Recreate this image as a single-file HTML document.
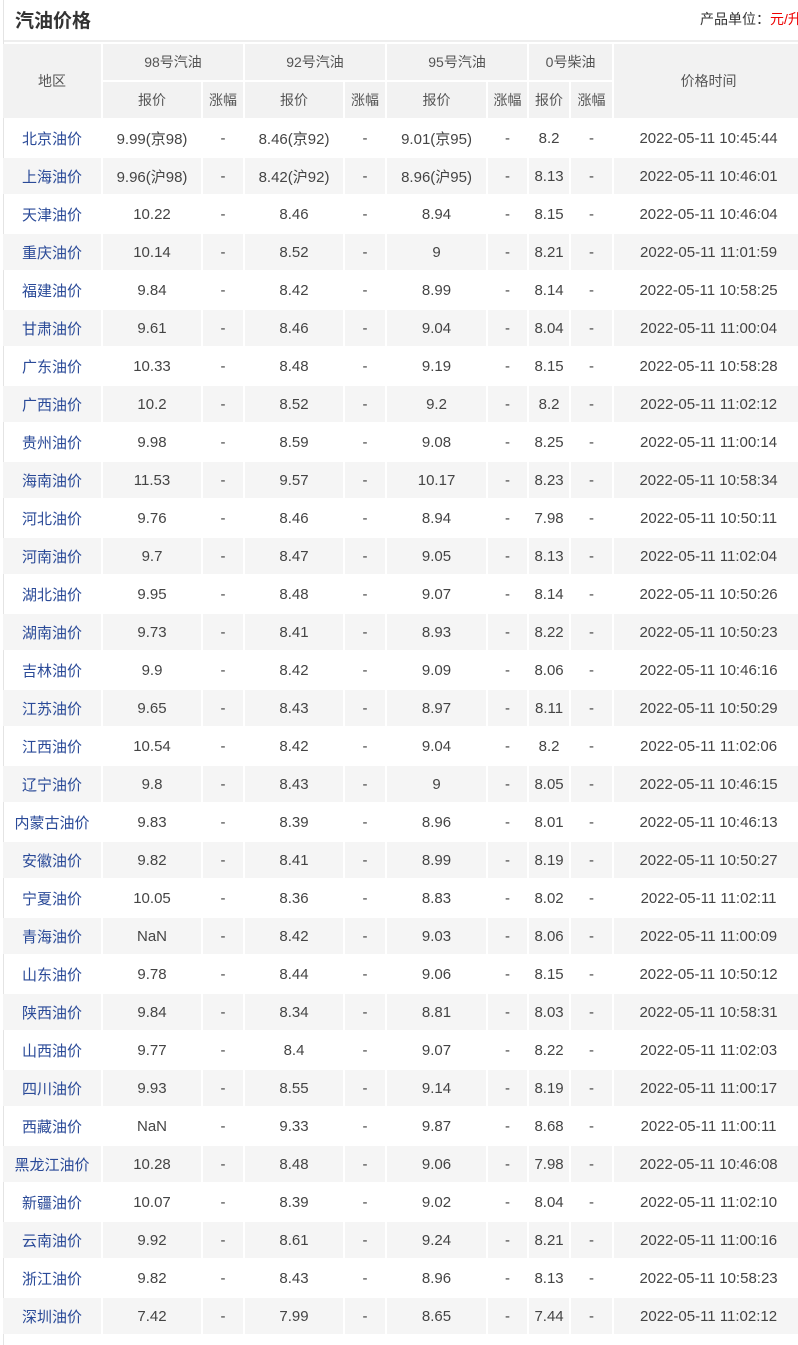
<!DOCTYPE html>
<html><head><meta charset="utf-8"><style>
body{margin:0;width:798px;height:1345px;overflow:hidden;background:#fff;font-family:"Liberation Sans","Noto Sans CJK SC",sans-serif;color:#444;font-size:15px;position:relative}
.lb{position:absolute;left:3px;top:0;width:1px;height:1345px;background:#e4e4e4}
.title{position:absolute;left:15px;top:6px;font-size:19px;font-weight:bold;color:#333}
.unit{position:absolute;left:700px;top:9px;font-size:14px;color:#333;white-space:nowrap}
.unit b{color:#e00;font-weight:normal}
.sep{position:absolute;left:4px;right:0;top:40px;height:2px;background:#eee}
table{position:absolute;left:1px;top:42px;border-collapse:separate;border-spacing:2px;table-layout:fixed;width:812px}
td,th{padding:0;text-align:center;font-weight:normal;white-space:nowrap;overflow:hidden}
thead th{background:#f2f2f2;height:36px;color:#555;font-size:14px}
tbody td{height:36px}
tbody tr:nth-child(even) td{background:#f5f5f5}
td a{color:#2a4a98;text-decoration:none}
td.t{padding-right:10px}
</style></head><body>
<div class="lb"></div>
<div class="title">汽油价格</div>
<div class="unit">产品单位：<b>元/升</b></div>
<div class="sep"></div>
<table>
<colgroup><col style="width:98px"><col style="width:98px"><col style="width:40px"><col style="width:98px"><col style="width:40px"><col style="width:99px"><col style="width:39px"><col style="width:40px"><col style="width:41px"><col style="width:199px"></colgroup>
<thead>
<tr><th rowspan="2">地区</th><th colspan="2">98号汽油</th><th colspan="2">92号汽油</th><th colspan="2">95号汽油</th><th colspan="2">0号柴油</th><th rowspan="2" style="padding-right:10px">价格时间</th></tr>
<tr><th>报价</th><th>涨幅</th><th>报价</th><th>涨幅</th><th>报价</th><th>涨幅</th><th>报价</th><th>涨幅</th></tr>
</thead>
<tbody>
<tr><td><a>北京油价</a></td><td>9.99(京98)</td><td>-</td><td>8.46(京92)</td><td>-</td><td>9.01(京95)</td><td>-</td><td>8.2</td><td>-</td><td class="t">2022-05-11 10:45:44</td></tr>
<tr><td><a>上海油价</a></td><td>9.96(沪98)</td><td>-</td><td>8.42(沪92)</td><td>-</td><td>8.96(沪95)</td><td>-</td><td>8.13</td><td>-</td><td class="t">2022-05-11 10:46:01</td></tr>
<tr><td><a>天津油价</a></td><td>10.22</td><td>-</td><td>8.46</td><td>-</td><td>8.94</td><td>-</td><td>8.15</td><td>-</td><td class="t">2022-05-11 10:46:04</td></tr>
<tr><td><a>重庆油价</a></td><td>10.14</td><td>-</td><td>8.52</td><td>-</td><td>9</td><td>-</td><td>8.21</td><td>-</td><td class="t">2022-05-11 11:01:59</td></tr>
<tr><td><a>福建油价</a></td><td>9.84</td><td>-</td><td>8.42</td><td>-</td><td>8.99</td><td>-</td><td>8.14</td><td>-</td><td class="t">2022-05-11 10:58:25</td></tr>
<tr><td><a>甘肃油价</a></td><td>9.61</td><td>-</td><td>8.46</td><td>-</td><td>9.04</td><td>-</td><td>8.04</td><td>-</td><td class="t">2022-05-11 11:00:04</td></tr>
<tr><td><a>广东油价</a></td><td>10.33</td><td>-</td><td>8.48</td><td>-</td><td>9.19</td><td>-</td><td>8.15</td><td>-</td><td class="t">2022-05-11 10:58:28</td></tr>
<tr><td><a>广西油价</a></td><td>10.2</td><td>-</td><td>8.52</td><td>-</td><td>9.2</td><td>-</td><td>8.2</td><td>-</td><td class="t">2022-05-11 11:02:12</td></tr>
<tr><td><a>贵州油价</a></td><td>9.98</td><td>-</td><td>8.59</td><td>-</td><td>9.08</td><td>-</td><td>8.25</td><td>-</td><td class="t">2022-05-11 11:00:14</td></tr>
<tr><td><a>海南油价</a></td><td>11.53</td><td>-</td><td>9.57</td><td>-</td><td>10.17</td><td>-</td><td>8.23</td><td>-</td><td class="t">2022-05-11 10:58:34</td></tr>
<tr><td><a>河北油价</a></td><td>9.76</td><td>-</td><td>8.46</td><td>-</td><td>8.94</td><td>-</td><td>7.98</td><td>-</td><td class="t">2022-05-11 10:50:11</td></tr>
<tr><td><a>河南油价</a></td><td>9.7</td><td>-</td><td>8.47</td><td>-</td><td>9.05</td><td>-</td><td>8.13</td><td>-</td><td class="t">2022-05-11 11:02:04</td></tr>
<tr><td><a>湖北油价</a></td><td>9.95</td><td>-</td><td>8.48</td><td>-</td><td>9.07</td><td>-</td><td>8.14</td><td>-</td><td class="t">2022-05-11 10:50:26</td></tr>
<tr><td><a>湖南油价</a></td><td>9.73</td><td>-</td><td>8.41</td><td>-</td><td>8.93</td><td>-</td><td>8.22</td><td>-</td><td class="t">2022-05-11 10:50:23</td></tr>
<tr><td><a>吉林油价</a></td><td>9.9</td><td>-</td><td>8.42</td><td>-</td><td>9.09</td><td>-</td><td>8.06</td><td>-</td><td class="t">2022-05-11 10:46:16</td></tr>
<tr><td><a>江苏油价</a></td><td>9.65</td><td>-</td><td>8.43</td><td>-</td><td>8.97</td><td>-</td><td>8.11</td><td>-</td><td class="t">2022-05-11 10:50:29</td></tr>
<tr><td><a>江西油价</a></td><td>10.54</td><td>-</td><td>8.42</td><td>-</td><td>9.04</td><td>-</td><td>8.2</td><td>-</td><td class="t">2022-05-11 11:02:06</td></tr>
<tr><td><a>辽宁油价</a></td><td>9.8</td><td>-</td><td>8.43</td><td>-</td><td>9</td><td>-</td><td>8.05</td><td>-</td><td class="t">2022-05-11 10:46:15</td></tr>
<tr><td><a>内蒙古油价</a></td><td>9.83</td><td>-</td><td>8.39</td><td>-</td><td>8.96</td><td>-</td><td>8.01</td><td>-</td><td class="t">2022-05-11 10:46:13</td></tr>
<tr><td><a>安徽油价</a></td><td>9.82</td><td>-</td><td>8.41</td><td>-</td><td>8.99</td><td>-</td><td>8.19</td><td>-</td><td class="t">2022-05-11 10:50:27</td></tr>
<tr><td><a>宁夏油价</a></td><td>10.05</td><td>-</td><td>8.36</td><td>-</td><td>8.83</td><td>-</td><td>8.02</td><td>-</td><td class="t">2022-05-11 11:02:11</td></tr>
<tr><td><a>青海油价</a></td><td>NaN</td><td>-</td><td>8.42</td><td>-</td><td>9.03</td><td>-</td><td>8.06</td><td>-</td><td class="t">2022-05-11 11:00:09</td></tr>
<tr><td><a>山东油价</a></td><td>9.78</td><td>-</td><td>8.44</td><td>-</td><td>9.06</td><td>-</td><td>8.15</td><td>-</td><td class="t">2022-05-11 10:50:12</td></tr>
<tr><td><a>陕西油价</a></td><td>9.84</td><td>-</td><td>8.34</td><td>-</td><td>8.81</td><td>-</td><td>8.03</td><td>-</td><td class="t">2022-05-11 10:58:31</td></tr>
<tr><td><a>山西油价</a></td><td>9.77</td><td>-</td><td>8.4</td><td>-</td><td>9.07</td><td>-</td><td>8.22</td><td>-</td><td class="t">2022-05-11 11:02:03</td></tr>
<tr><td><a>四川油价</a></td><td>9.93</td><td>-</td><td>8.55</td><td>-</td><td>9.14</td><td>-</td><td>8.19</td><td>-</td><td class="t">2022-05-11 11:00:17</td></tr>
<tr><td><a>西藏油价</a></td><td>NaN</td><td>-</td><td>9.33</td><td>-</td><td>9.87</td><td>-</td><td>8.68</td><td>-</td><td class="t">2022-05-11 11:00:11</td></tr>
<tr><td><a>黑龙江油价</a></td><td>10.28</td><td>-</td><td>8.48</td><td>-</td><td>9.06</td><td>-</td><td>7.98</td><td>-</td><td class="t">2022-05-11 10:46:08</td></tr>
<tr><td><a>新疆油价</a></td><td>10.07</td><td>-</td><td>8.39</td><td>-</td><td>9.02</td><td>-</td><td>8.04</td><td>-</td><td class="t">2022-05-11 11:02:10</td></tr>
<tr><td><a>云南油价</a></td><td>9.92</td><td>-</td><td>8.61</td><td>-</td><td>9.24</td><td>-</td><td>8.21</td><td>-</td><td class="t">2022-05-11 11:00:16</td></tr>
<tr><td><a>浙江油价</a></td><td>9.82</td><td>-</td><td>8.43</td><td>-</td><td>8.96</td><td>-</td><td>8.13</td><td>-</td><td class="t">2022-05-11 10:58:23</td></tr>
<tr><td><a>深圳油价</a></td><td>7.42</td><td>-</td><td>7.99</td><td>-</td><td>8.65</td><td>-</td><td>7.44</td><td>-</td><td class="t">2022-05-11 11:02:12</td></tr>
</tbody>
</table>
</body></html>
